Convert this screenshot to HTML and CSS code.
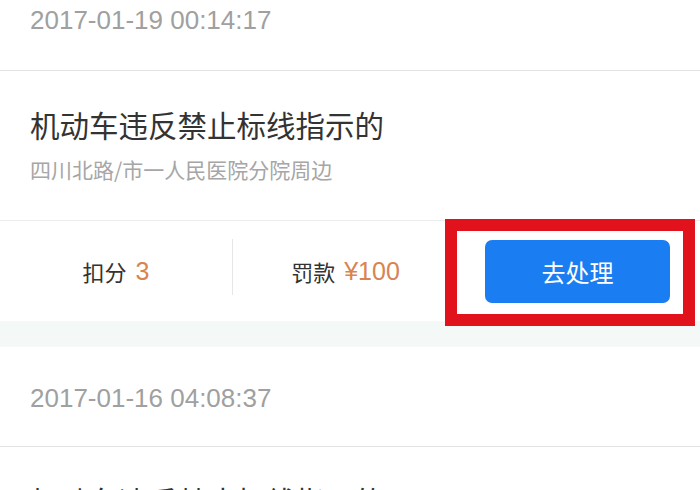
FILE: index.html
```html
<!DOCTYPE html>
<html lang="zh-CN">
<head>
<meta charset="utf-8">
<title>违章列表</title>
<link rel="stylesheet" href="styles.css">
</head>
<body>
<div class="list">
  <div class="card card-first">
    <div class="card-time">2017-01-19 00:14:17</div>
    <div class="card-body">
      <div class="card-title">机动车违反禁止标线指示的</div>
      <div class="card-place">四川北路/市一人民医院分院周边</div>
    </div>
    <div class="card-actions">
      <div class="stat">扣分<span class="num">3</span></div>
      <div class="stat stat-fine">罚款<span class="num">¥100</span></div>
      <div class="action-cell">
        <button class="btn-handle">去处理</button>
      </div>
      <div class="highlight"></div>
    </div>
  </div>
  <div class="gap"></div>
  <div class="card">
    <div class="card-time card-time-next">2017-01-16 04:08:37</div>
    <div class="card-body">
      <div class="card-title">机动车违反禁止标线指示的</div>
      <div class="card-place">四川北路/市一人民医院分院周边</div>
    </div>
  </div>
</div>
</body>
</html>
```
FILE: styles.css
```css
* { box-sizing: border-box; }
html, body {
  margin: 0;
  padding: 0;
  background: #ffffff;
  overflow: hidden;
}
body {
  font-family: "Liberation Sans", "Noto Sans CJK SC", sans-serif;
  color: #333333;
}
.list {
  display: flex;
  flex-direction: column;
}
.card {
  background: #ffffff;
  display: flex;
  flex-direction: column;
}
.card-first {
  margin-top: -29px;
}
.card-time {
  height: 100px;
  display: flex;
  align-items: center;
  padding-left: 30px;
  font-size: 26px;
  color: #a0a0a0;
  border-bottom: 1px solid #e4e4e4;
}
.card-time-next {
  padding-top: 4px;
}
.card-body {
  padding: 35px 30px 38px;
  border-bottom: 1px solid #ececec;
  display: flex;
  flex-direction: column;
  gap: 14px;
}
.card-title {
  font-family: "Noto Sans CJK SC", sans-serif;
  font-size: 29.5px;
  line-height: 36px;
  color: #333333;
}
.card-place {
  font-family: "Noto Sans CJK SC", sans-serif;
  font-size: 21px;
  line-height: 26px;
  color: #a6a6a6;
}
.card-actions {
  position: relative;
  height: 100px;
  display: grid;
  grid-template-columns: 232px 226px 1fr;
  align-items: center;
}
.stat {
  font-family: "Noto Sans CJK SC", sans-serif;
  font-size: 22px;
  color: #333333;
  display: flex;
  justify-content: center;
  align-items: center;
}
.stat-fine {
  border-left: 1px solid #e6e6e6;
  height: 56px;
  margin-top: -8px;
  padding-top: 8px;
}
.num {
  font-family: "Liberation Sans", sans-serif;
  font-size: 25px;
  color: #d8844f;
  margin-left: 9px;
}
.action-cell {
  display: flex;
  justify-content: flex-end;
  padding-right: 30px;
}
.btn-handle {
  width: 185px;
  height: 63px;
  border: none;
  border-radius: 7px;
  background: #1a7ef2;
  color: #ffffff;
  font-family: "Noto Sans CJK SC", sans-serif;
  font-size: 24px;
  padding: 0;
}
.highlight {
  position: absolute;
  left: 445px;
  top: -2px;
  width: 250px;
  height: 107px;
  border: 12px solid #e2121d;
  pointer-events: none;
}
.gap {
  height: 26px;
  background: #f4f8f7;
}
```
